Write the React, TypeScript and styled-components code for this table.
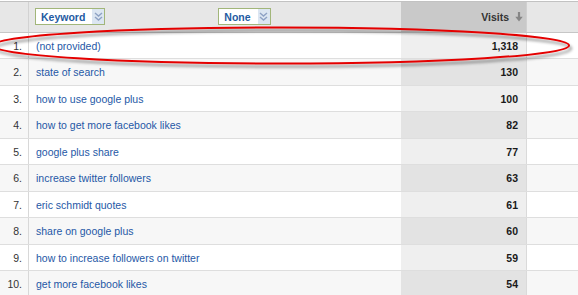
import React from 'react';
import styled, { createGlobalStyle } from 'styled-components';

const GlobalStyle = createGlobalStyle`
  html, body {
    margin: 0;
    padding: 0;
    background: #fff;
  }
  body {
    font-family: "Liberation Sans", Arial, sans-serif;
  }
`;

interface KeywordRow {
  keyword: string;
  visits: string;
}

const rows: KeywordRow[] = [
  { keyword: '(not provided)', visits: '1,318' },
  { keyword: 'state of search', visits: '130' },
  { keyword: 'how to use google plus', visits: '100' },
  { keyword: 'how to get more facebook likes', visits: '82' },
  { keyword: 'google plus share', visits: '77' },
  { keyword: 'increase twitter followers', visits: '63' },
  { keyword: 'eric schmidt quotes', visits: '61' },
  { keyword: 'share on google plus', visits: '60' },
  { keyword: 'how to increase followers on twitter', visits: '59' },
  { keyword: 'get more facebook likes', visits: '54' },
];

const App: React.FC = () => {
  return (
    <Page>
      <GlobalStyle />
      <HeaderRow>
        <HeadNum />
        <HeadKeyword>
          <Dropdown>
            <DropLabel>Keyword</DropLabel>
            <ChevronBox>
              <DoubleChevron />
            </ChevronBox>
          </Dropdown>
          <Dropdown>
            <DropLabel>None</DropLabel>
            <ChevronBox>
              <DoubleChevron />
            </ChevronBox>
          </Dropdown>
        </HeadKeyword>
        <HeadVisits>
          Visits
          <svg width="8" height="10" viewBox="0 0 8 10">
            <path d="M4 0 V6" stroke="#868686" strokeWidth="2.2" fill="none" />
            <path d="M0.3 4.8 L7.7 4.8 L4 9.6 Z" fill="#868686" />
          </svg>
        </HeadVisits>
        <HeadRest />
      </HeaderRow>
      {rows.map((row, i) => (
        <Row key={row.keyword} $even={i % 2 === 1}>
          <NumCell>{i + 1}.</NumCell>
          <KeywordCell>{row.keyword}</KeywordCell>
          <VisitsCell $even={i % 2 === 1}>{row.visits}</VisitsCell>
          <span />
        </Row>
      ))}
      <Annotation width="578" height="295" viewBox="0 0 578 295">
        <defs>
          <filter id="ink-shadow" x="-10%" y="-50%" width="120%" height="200%">
            <feDropShadow dx="2" dy="3" stdDeviation="1.6" floodColor="#000" floodOpacity="0.45" />
          </filter>
        </defs>
        <ellipse
          cx="281"
          cy="45.5"
          rx="288"
          ry="18"
          fill="none"
          stroke="#e40000"
          strokeWidth="2"
          filter="url(#ink-shadow)"
        />
      </Annotation>
    </Page>
  );
};

const DoubleChevron: React.FC = () => (
  <svg width="9" height="9" viewBox="0 0 9 9">
    <path d="M1 1 L4.5 4 L8 1" stroke="#8ea2c4" strokeWidth="1.4" fill="none" />
    <path d="M1 5 L4.5 8 L8 5" stroke="#8ea2c4" strokeWidth="1.4" fill="none" />
  </svg>
);

const columns = '29px 372px 126px 1fr';

const Page = styled.div`
  position: relative;
  width: 578px;
  height: 295px;
  overflow: hidden;
  padding-top: 1px;
  box-sizing: border-box;
  font-size: 10.5px;
`;

const HeaderRow = styled.div`
  display: grid;
  grid-template-columns: ${columns};
  height: 32px;
  box-sizing: border-box;
  border-top: 1px solid #c2c2c2;
  border-bottom: 1px solid #c6c6c6;
  background: #e7e7e7;
`;

const HeadNum = styled.div`
  border-right: 1px solid #d2d2d2;
`;

const HeadKeyword = styled.div`
  display: flex;
  align-items: center;
  gap: 113px;
  padding-left: 6px;
  padding-bottom: 1px;
`;

const Dropdown = styled.div`
  display: flex;
  align-items: stretch;
  height: 17px;
  box-sizing: border-box;
  border: 1px solid #a2b67a;
  background: #fff;
`;

const DropLabel = styled.span`
  display: flex;
  align-items: center;
  padding: 0 7px 0 5px;
  font-weight: bold;
  color: #1f5ba2;
`;

const ChevronBox = styled.span`
  display: flex;
  align-items: center;
  justify-content: center;
  width: 12px;
  background: #dce6f2;
`;

const HeadVisits = styled.div`
  display: flex;
  align-items: center;
  justify-content: flex-end;
  gap: 6px;
  padding-right: 3px;
  padding-bottom: 1px;
  background: #c9c9c9;
  border-right: 1px solid #d0d0d0;
  font-weight: bold;
  color: #333;
`;

const HeadRest = styled.div``;

const Row = styled.div<{ $even: boolean }>`
  display: grid;
  grid-template-columns: ${columns};
  height: ${(p) => (p.$even ? 27 : 26)}px;
  box-sizing: border-box;
  border-bottom: 1px solid #dedede;
  background: ${(p) => (p.$even ? '#f7f7f7' : '#fff')};
`;

const NumCell = styled.div`
  display: flex;
  align-items: center;
  justify-content: flex-end;
  padding-right: 6px;
  border-right: 1px solid #d8d8d8;
  color: #333;
`;

const KeywordCell = styled.div`
  display: flex;
  align-items: center;
  padding-left: 7px;
  color: #2558a6;
  white-space: nowrap;
`;

const VisitsCell = styled.div<{ $even: boolean }>`
  display: flex;
  align-items: center;
  justify-content: flex-end;
  padding-right: 8px;
  background: ${(p) => (p.$even ? '#e3e3e3' : '#efefef')};
  border-right: 1px solid #dadada;
  font-weight: bold;
  color: #1a1a1a;
`;

const Annotation = styled.svg`
  position: absolute;
  top: 0;
  left: 0;
  pointer-events: none;
`;

export default App;
